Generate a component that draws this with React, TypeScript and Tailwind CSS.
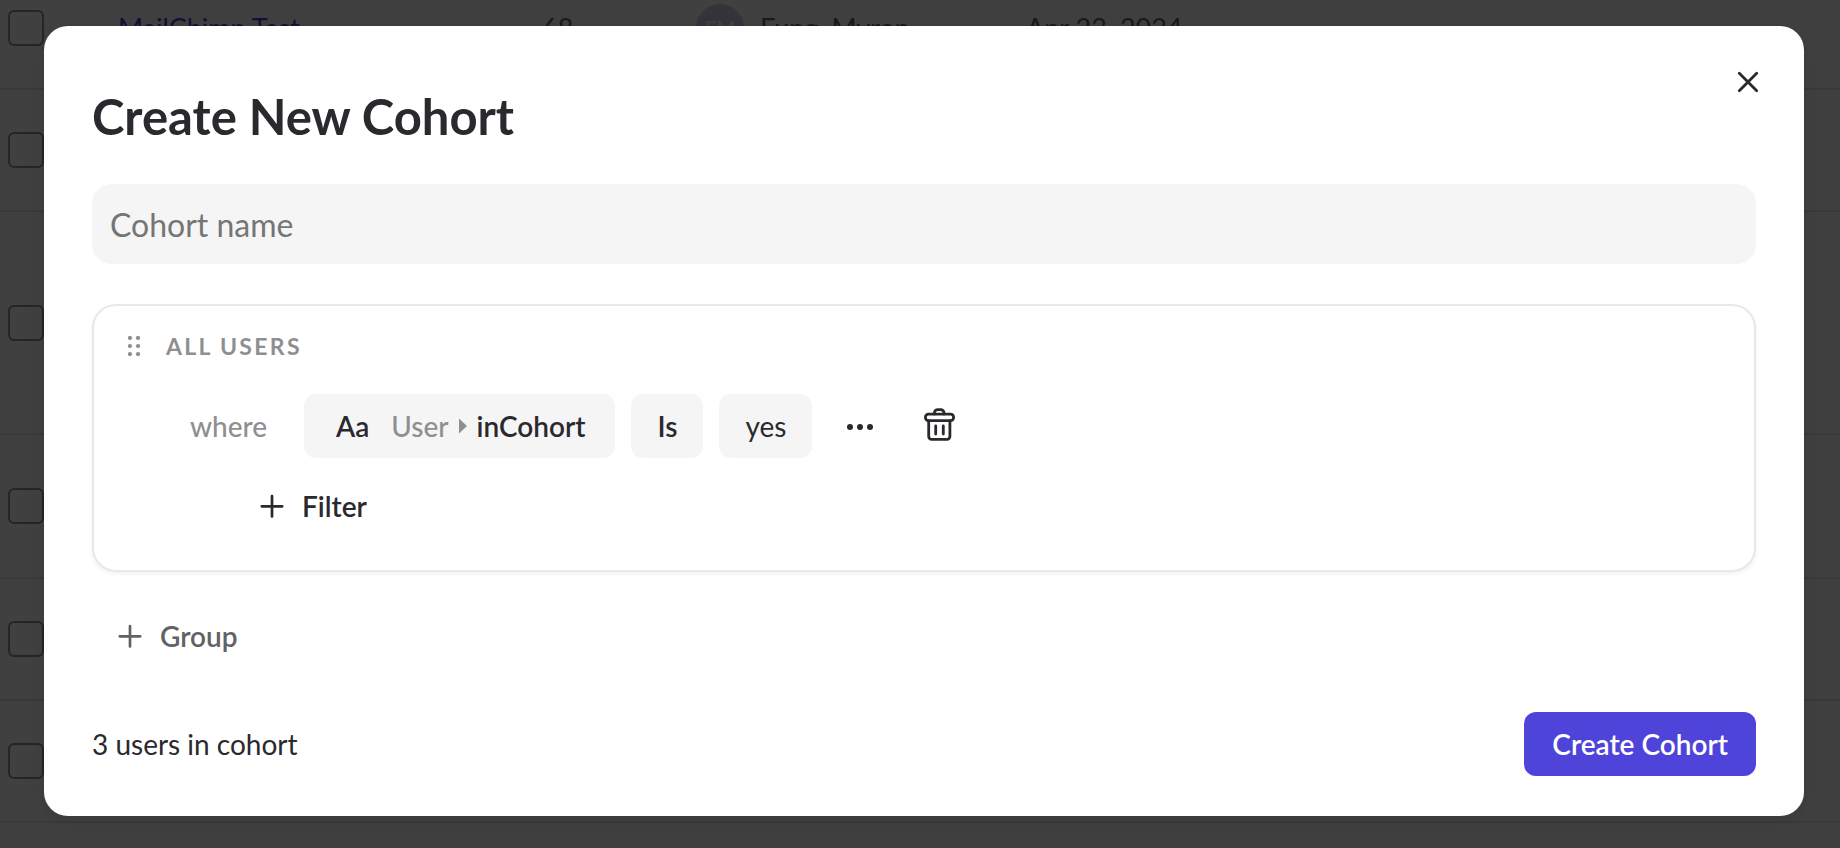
import type { ReactNode } from "react";

type Cohort = {
  id: number;
  height: string;
  name?: string;
  count?: string;
  initials?: string;
  owner?: string;
  date?: string;
};

const cohorts: Cohort[] = [
  { id: 1, height: "h-[122px]", name: "MailChimp Test", count: "68", initials: "FM", owner: "Fung, Myron", date: "Apr 23, 2024" },
  { id: 2, height: "h-[122px]" },
  { id: 3, height: "h-[223px]" },
  { id: 4, height: "h-36" },
  { id: 5, height: "h-[122px]" },
  { id: 6, height: "h-[122px]" },
  { id: 7, height: "h-[122px]" },
];

function CohortTable() {
  return (
    <div className="-mt-8" aria-hidden="true">
      <table className="w-full table-fixed border-separate border-spacing-0 text-left text-[27px] text-[#68676d]">
        <colgroup>
          <col className="w-[118px]" />
          <col className="w-[424px]" />
          <col className="w-[154px]" />
          <col className="w-[330px]" />
          <col />
        </colgroup>
        <tbody>
          {cohorts.map((c) => (
            <tr key={c.id} className={c.height}>
              <td className="border-b-2 border-[#e6e6e6] p-0 pl-2">
                <input
                  type="checkbox"
                  aria-label={`Select cohort ${c.id}`}
                  className="block size-9 appearance-none rounded-md border-2 border-[#949494]"
                />
              </td>
              <td className="border-b-2 border-[#e6e6e6] p-0">
                {c.name && <a href="#cohort" className="text-[#4f44e0]">{c.name}</a>}
              </td>
              <td className="border-b-2 border-[#e6e6e6] p-0">{c.count}</td>
              <td className="border-b-2 border-[#e6e6e6] p-0">
                {c.owner && (
                  <div className="flex items-center gap-4">
                    <span className="flex size-12 items-center justify-center rounded-full bg-[#d0d0e8] text-xl font-bold text-white">
                      {c.initials}
                    </span>
                    {c.owner}
                  </div>
                )}
              </td>
              <td className="border-b-2 border-[#e6e6e6] p-0">{c.date}</td>
            </tr>
          ))}
        </tbody>
      </table>
    </div>
  );
}

function PlusIcon() {
  return (
    <svg className="size-6" viewBox="0 0 24 24" fill="none" stroke="currentColor" strokeWidth="2.7" strokeLinecap="round" aria-hidden="true">
      <path d="M12 2v20.500M1.800 12.300h20.400" />
    </svg>
  );
}

function CloseIcon() {
  return (
    <svg className="size-6" viewBox="0 0 24 24" fill="none" stroke="currentColor" strokeWidth="2.8" strokeLinecap="round" aria-hidden="true">
      <path d="M3.300 3.300l17.400 17.400M20.700 3.300L3.300 20.700" />
    </svg>
  );
}

function DragIcon() {
  return (
    <svg className="h-5 w-3" viewBox="0 0 12 20" fill="currentColor" aria-hidden="true">
      {[2, 10, 18].map((y) => (
        <g key={y}>
          <circle cx="2" cy={y} r="2.100" />
          <circle cx="10" cy={y} r="2.100" />
        </g>
      ))}
    </svg>
  );
}

function MoreIcon() {
  return (
    <svg className="h-2 w-7" viewBox="0 0 28 8" fill="currentColor" aria-hidden="true">
      <circle cx="4" cy="5" r="3" />
      <circle cx="14" cy="5" r="3" />
      <circle cx="24" cy="5" r="3" />
    </svg>
  );
}

function TrashIcon() {
  return (
    <svg className="h-9 w-8" viewBox="0 0 32 36" fill="none" stroke="currentColor" strokeWidth="2.8" strokeLinecap="round" strokeLinejoin="round" aria-hidden="true">
      <path d="M10.400 6V5a3.400 3.400 0 0 1 3.400-3.400h2.800A3.400 3.400 0 0 1 20 5v1" />
      <rect x="1.400" y="6.200" width="28.200" height="6.400" rx="3" />
      <path d="M4.700 12.800v15.800a2.800 2.800 0 0 0 2.800 2.800h15.600a2.800 2.800 0 0 0 2.800-2.800V12.800" />
      <path d="M11.700 18v8M19.300 18v8" />
    </svg>
  );
}

function CaretIcon() {
  return (
    <svg className="h-4 w-2 text-[#8f8f91]" viewBox="0 0 8 16" fill="currentColor" aria-hidden="true">
      <path d="M0 .4v15.200L8 8z" />
    </svg>
  );
}

function Chip({ className, children }: { className: string; children: ReactNode }) {
  return (
    <button type="button" className={`flex h-16 items-center rounded-xl bg-[#f5f5f5] ${className}`}>
      {children}
    </button>
  );
}

function FilterGroup() {
  return (
    <section className="mt-10 rounded-3xl border-2 border-[#e8e8e8] px-[34px] pt-6 pb-8 shadow-[0_2px_4px_rgba(0,0,0,0.06)]">
      <header className="flex h-8 items-center gap-[26px] text-[#8f8f91]">
        <DragIcon />
        <h2 className="text-[23px] font-bold tracking-widest">ALL USERS</h2>
      </header>
      <div className="mt-8 flex items-center pl-[62px] font-semibold">
        <span className="w-[114px] font-medium text-[#8f8f91]">where</span>
        <div className="flex items-center gap-4">
          <Chip className="pr-[30px] pl-8">
            <span>Aa</span>
            <span className="ml-[22px] font-medium text-[#8f8f91]">User</span>
            <span className="mx-2.5"><CaretIcon /></span>
            <span>inCohort</span>
          </Chip>
          <Chip className="px-[26px]">Is</Chip>
          <Chip className="px-[26px] font-normal">yes</Chip>
          <button type="button" aria-label="More options" className="flex size-16 items-center justify-center">
            <MoreIcon />
          </button>
          <button type="button" aria-label="Delete filter" className="ml-4 flex h-16 items-center">
            <TrashIcon />
          </button>
        </div>
      </div>
      <button type="button" className="mt-4 ml-[132px] flex h-16 items-center gap-[18px] font-semibold">
        <PlusIcon />
        Filter
      </button>
    </section>
  );
}

export default function App() {
  return (
    <div className="relative h-screen overflow-hidden bg-white font-['Lato',sans-serif] text-[28px] text-[#2a292e]">
      <CohortTable />
      <div className="absolute inset-0 overflow-hidden bg-black/75 pt-[26px] pr-9 pl-11">
        <div
          role="dialog"
          aria-modal="true"
          aria-labelledby="dialog-title"
          className="relative rounded-3xl bg-white px-12 pt-[62px] pb-10 shadow-[0_4px_16px_rgba(0,0,0,0.1)]"
        >
          <button type="button" aria-label="Close" className="absolute top-8 right-8 p-3">
            <CloseIcon />
          </button>
          <h1 id="dialog-title" className="text-[49px]/[56px] font-bold">Create New Cohort</h1>
          <input
            type="text"
            aria-label="Cohort name"
            placeholder="Cohort name"
            className="mt-10 block h-20 w-full rounded-[20px] bg-[#f5f5f5] px-[18px] text-[32px] outline-none placeholder:text-[#757575]"
          />
          <FilterGroup />
          <button type="button" className="mt-8 ml-[26px] flex h-16 items-center gap-[18px] font-semibold text-[#626266]">
            <PlusIcon />
            Group
          </button>
          <footer className="mt-11 flex items-center justify-between">
            <p>3 users in cohort</p>
            <button type="button" className="h-16 rounded-xl bg-[#4f44d9] px-7 font-semibold text-white">
              Create Cohort
            </button>
          </footer>
        </div>
      </div>
    </div>
  );
}
